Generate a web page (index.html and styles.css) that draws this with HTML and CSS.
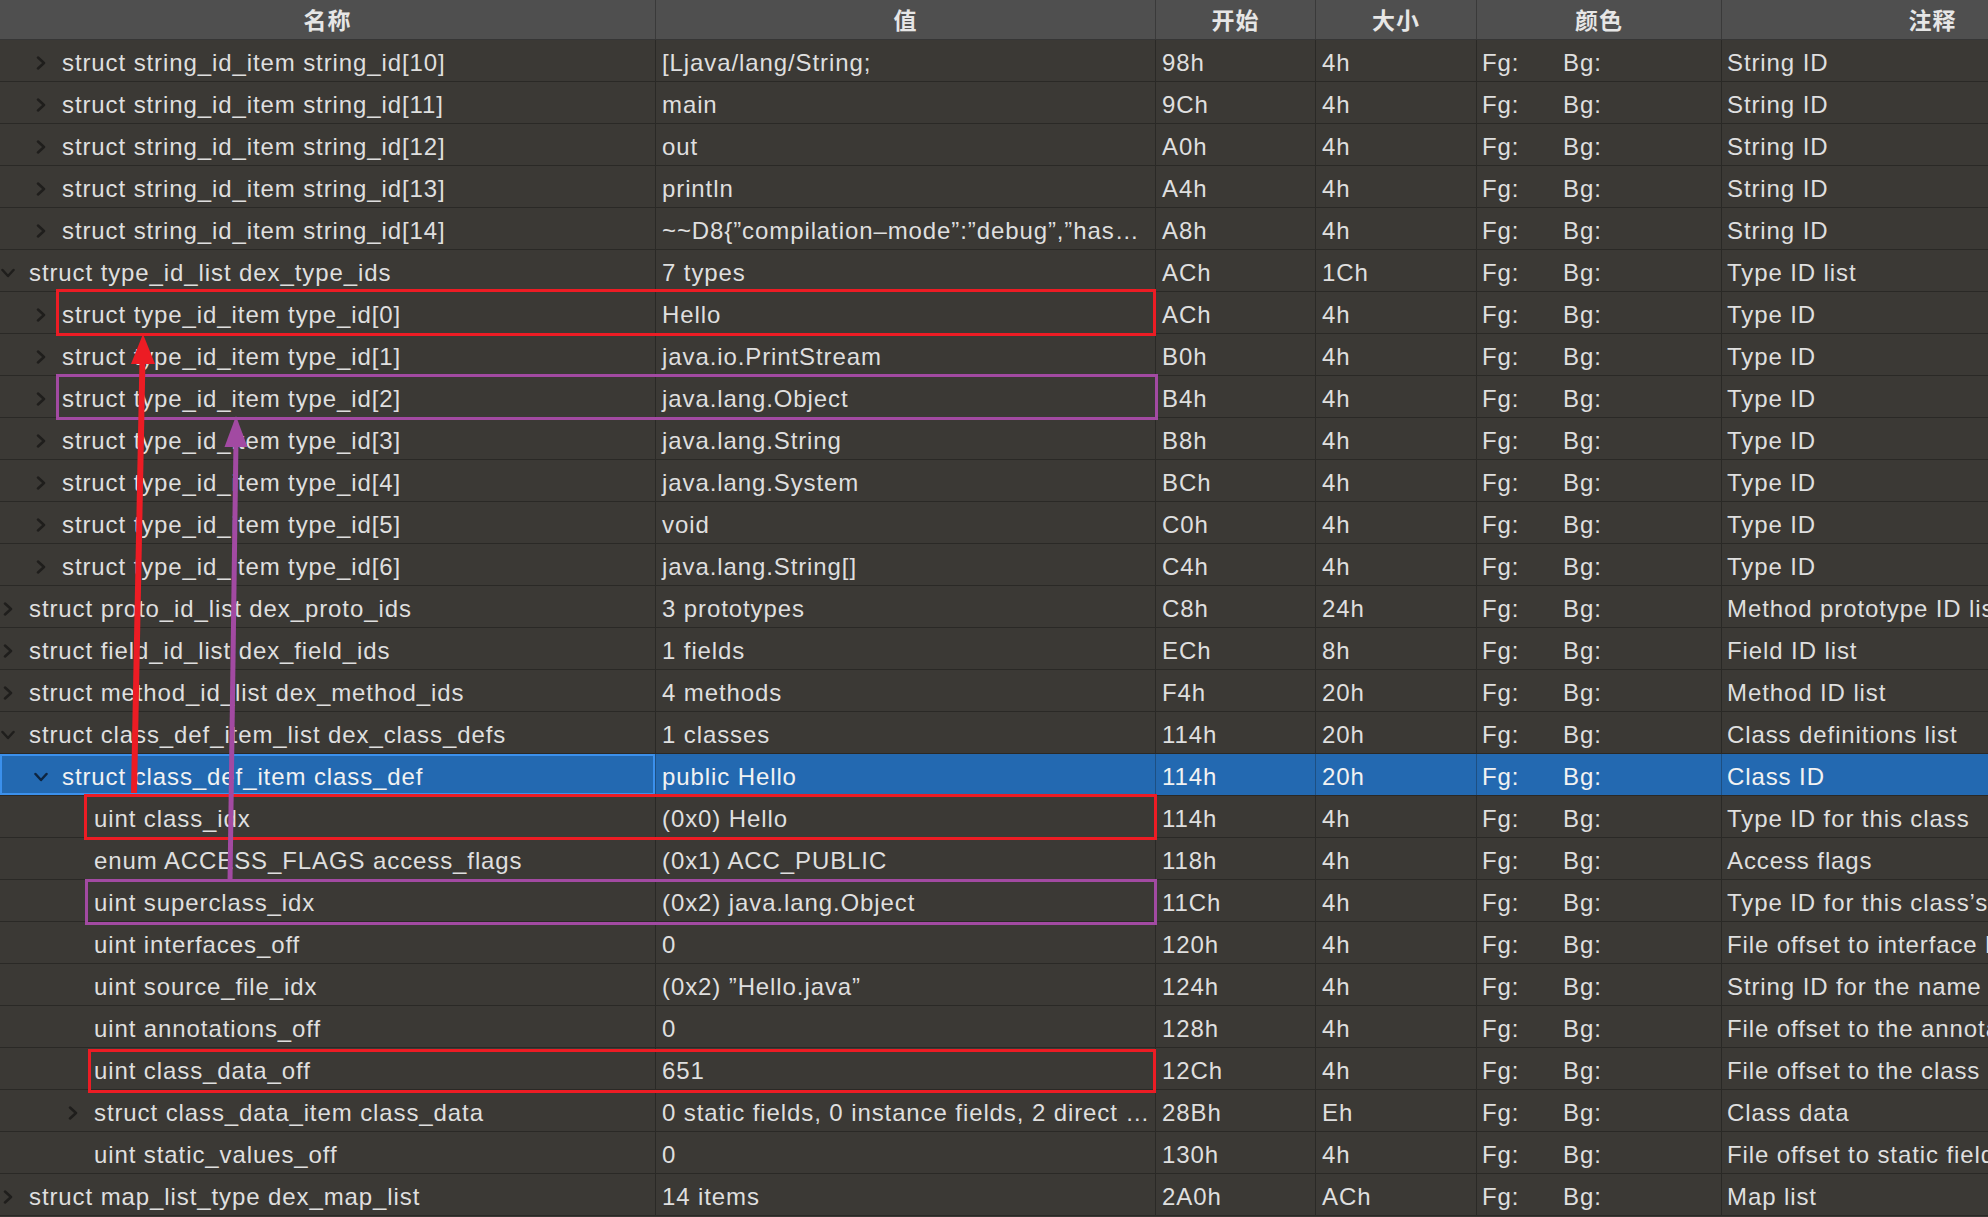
FILE: index.html
```html
<!DOCTYPE html>
<html lang="zh-CN">
<head>
<meta charset="utf-8">
<title>DEX Template</title>
<link rel="stylesheet" href="styles.css">
</head>
<body>
<div class="table">
  <div class="row head">
    <div class="cell">名称</div>
    <div class="cell">值</div>
    <div class="cell">开始</div>
    <div class="cell">大小</div>
    <div class="cell">颜色</div>
    <div class="cell">注释</div>
  </div>

  <div class="row"><div class="cell name lv1"><svg class="chev" viewBox="0 0 14 14"><polyline points="4,1.5 10,7 4,12.5"/></svg><span>struct string_id_item string_id[10]</span></div><div class="cell">[Ljava/lang/String;</div><div class="cell">98h</div><div class="cell">4h</div><div class="cell col"><span class="fg">Fg:</span><span>Bg:</span></div><div class="cell note">String ID</div></div>
  <div class="row"><div class="cell name lv1"><svg class="chev" viewBox="0 0 14 14"><polyline points="4,1.5 10,7 4,12.5"/></svg><span>struct string_id_item string_id[11]</span></div><div class="cell">main</div><div class="cell">9Ch</div><div class="cell">4h</div><div class="cell col"><span class="fg">Fg:</span><span>Bg:</span></div><div class="cell note">String ID</div></div>
  <div class="row"><div class="cell name lv1"><svg class="chev" viewBox="0 0 14 14"><polyline points="4,1.5 10,7 4,12.5"/></svg><span>struct string_id_item string_id[12]</span></div><div class="cell">out</div><div class="cell">A0h</div><div class="cell">4h</div><div class="cell col"><span class="fg">Fg:</span><span>Bg:</span></div><div class="cell note">String ID</div></div>
  <div class="row"><div class="cell name lv1"><svg class="chev" viewBox="0 0 14 14"><polyline points="4,1.5 10,7 4,12.5"/></svg><span>struct string_id_item string_id[13]</span></div><div class="cell">println</div><div class="cell">A4h</div><div class="cell">4h</div><div class="cell col"><span class="fg">Fg:</span><span>Bg:</span></div><div class="cell note">String ID</div></div>
  <div class="row"><div class="cell name lv1"><svg class="chev" viewBox="0 0 14 14"><polyline points="4,1.5 10,7 4,12.5"/></svg><span>struct string_id_item string_id[14]</span></div><div class="cell">~~D8{”compilation–mode”:”debug”,”has…</div><div class="cell">A8h</div><div class="cell">4h</div><div class="cell col"><span class="fg">Fg:</span><span>Bg:</span></div><div class="cell note">String ID</div></div>

  <div class="row"><div class="cell name lv0"><svg class="chev" viewBox="0 0 14 14"><polyline points="1.5,4 7,10 12.5,4"/></svg><span>struct type_id_list dex_type_ids</span></div><div class="cell">7 types</div><div class="cell">ACh</div><div class="cell">1Ch</div><div class="cell col"><span class="fg">Fg:</span><span>Bg:</span></div><div class="cell note">Type ID list</div></div>
  <div class="row"><div class="cell name lv1"><svg class="chev" viewBox="0 0 14 14"><polyline points="4,1.5 10,7 4,12.5"/></svg><span>struct type_id_item type_id[0]</span></div><div class="cell">Hello</div><div class="cell">ACh</div><div class="cell">4h</div><div class="cell col"><span class="fg">Fg:</span><span>Bg:</span></div><div class="cell note">Type ID</div></div>
  <div class="row"><div class="cell name lv1"><svg class="chev" viewBox="0 0 14 14"><polyline points="4,1.5 10,7 4,12.5"/></svg><span>struct type_id_item type_id[1]</span></div><div class="cell">java.io.PrintStream</div><div class="cell">B0h</div><div class="cell">4h</div><div class="cell col"><span class="fg">Fg:</span><span>Bg:</span></div><div class="cell note">Type ID</div></div>
  <div class="row"><div class="cell name lv1"><svg class="chev" viewBox="0 0 14 14"><polyline points="4,1.5 10,7 4,12.5"/></svg><span>struct type_id_item type_id[2]</span></div><div class="cell">java.lang.Object</div><div class="cell">B4h</div><div class="cell">4h</div><div class="cell col"><span class="fg">Fg:</span><span>Bg:</span></div><div class="cell note">Type ID</div></div>
  <div class="row"><div class="cell name lv1"><svg class="chev" viewBox="0 0 14 14"><polyline points="4,1.5 10,7 4,12.5"/></svg><span>struct type_id_item type_id[3]</span></div><div class="cell">java.lang.String</div><div class="cell">B8h</div><div class="cell">4h</div><div class="cell col"><span class="fg">Fg:</span><span>Bg:</span></div><div class="cell note">Type ID</div></div>
  <div class="row"><div class="cell name lv1"><svg class="chev" viewBox="0 0 14 14"><polyline points="4,1.5 10,7 4,12.5"/></svg><span>struct type_id_item type_id[4]</span></div><div class="cell">java.lang.System</div><div class="cell">BCh</div><div class="cell">4h</div><div class="cell col"><span class="fg">Fg:</span><span>Bg:</span></div><div class="cell note">Type ID</div></div>
  <div class="row"><div class="cell name lv1"><svg class="chev" viewBox="0 0 14 14"><polyline points="4,1.5 10,7 4,12.5"/></svg><span>struct type_id_item type_id[5]</span></div><div class="cell">void</div><div class="cell">C0h</div><div class="cell">4h</div><div class="cell col"><span class="fg">Fg:</span><span>Bg:</span></div><div class="cell note">Type ID</div></div>
  <div class="row"><div class="cell name lv1"><svg class="chev" viewBox="0 0 14 14"><polyline points="4,1.5 10,7 4,12.5"/></svg><span>struct type_id_item type_id[6]</span></div><div class="cell">java.lang.String[]</div><div class="cell">C4h</div><div class="cell">4h</div><div class="cell col"><span class="fg">Fg:</span><span>Bg:</span></div><div class="cell note">Type ID</div></div>

  <div class="row"><div class="cell name lv0"><svg class="chev" viewBox="0 0 14 14"><polyline points="4,1.5 10,7 4,12.5"/></svg><span>struct proto_id_list dex_proto_ids</span></div><div class="cell">3 prototypes</div><div class="cell">C8h</div><div class="cell">24h</div><div class="cell col"><span class="fg">Fg:</span><span>Bg:</span></div><div class="cell note">Method prototype ID list</div></div>
  <div class="row"><div class="cell name lv0"><svg class="chev" viewBox="0 0 14 14"><polyline points="4,1.5 10,7 4,12.5"/></svg><span>struct field_id_list dex_field_ids</span></div><div class="cell">1 fields</div><div class="cell">ECh</div><div class="cell">8h</div><div class="cell col"><span class="fg">Fg:</span><span>Bg:</span></div><div class="cell note">Field ID list</div></div>
  <div class="row"><div class="cell name lv0"><svg class="chev" viewBox="0 0 14 14"><polyline points="4,1.5 10,7 4,12.5"/></svg><span>struct method_id_list dex_method_ids</span></div><div class="cell">4 methods</div><div class="cell">F4h</div><div class="cell">20h</div><div class="cell col"><span class="fg">Fg:</span><span>Bg:</span></div><div class="cell note">Method ID list</div></div>
  <div class="row"><div class="cell name lv0"><svg class="chev" viewBox="0 0 14 14"><polyline points="1.5,4 7,10 12.5,4"/></svg><span>struct class_def_item_list dex_class_defs</span></div><div class="cell">1 classes</div><div class="cell">114h</div><div class="cell">20h</div><div class="cell col"><span class="fg">Fg:</span><span>Bg:</span></div><div class="cell note">Class definitions list</div></div>

  <div class="row sel"><div class="cell name lv1"><svg class="chev" viewBox="0 0 14 14"><polyline points="1.5,4 7,10 12.5,4"/></svg><span>struct class_def_item class_def</span></div><div class="cell">public Hello</div><div class="cell">114h</div><div class="cell">20h</div><div class="cell col"><span class="fg">Fg:</span><span>Bg:</span></div><div class="cell note">Class ID</div></div>

  <div class="row"><div class="cell name lv2"><span class="nochev"></span><span>uint class_idx</span></div><div class="cell">(0x0) Hello</div><div class="cell">114h</div><div class="cell">4h</div><div class="cell col"><span class="fg">Fg:</span><span>Bg:</span></div><div class="cell note">Type ID for this class</div></div>
  <div class="row"><div class="cell name lv2"><span class="nochev"></span><span>enum ACCESS_FLAGS access_flags</span></div><div class="cell">(0x1) ACC_PUBLIC</div><div class="cell">118h</div><div class="cell">4h</div><div class="cell col"><span class="fg">Fg:</span><span>Bg:</span></div><div class="cell note">Access flags</div></div>
  <div class="row"><div class="cell name lv2"><span class="nochev"></span><span>uint superclass_idx</span></div><div class="cell">(0x2) java.lang.Object</div><div class="cell">11Ch</div><div class="cell">4h</div><div class="cell col"><span class="fg">Fg:</span><span>Bg:</span></div><div class="cell note">Type ID for this class’s superclass</div></div>
  <div class="row"><div class="cell name lv2"><span class="nochev"></span><span>uint interfaces_off</span></div><div class="cell">0</div><div class="cell">120h</div><div class="cell">4h</div><div class="cell col"><span class="fg">Fg:</span><span>Bg:</span></div><div class="cell note">File offset to interface list</div></div>
  <div class="row"><div class="cell name lv2"><span class="nochev"></span><span>uint source_file_idx</span></div><div class="cell">(0x2) ”Hello.java”</div><div class="cell">124h</div><div class="cell">4h</div><div class="cell col"><span class="fg">Fg:</span><span>Bg:</span></div><div class="cell note">String ID for the name of source file</div></div>
  <div class="row"><div class="cell name lv2"><span class="nochev"></span><span>uint annotations_off</span></div><div class="cell">0</div><div class="cell">128h</div><div class="cell">4h</div><div class="cell col"><span class="fg">Fg:</span><span>Bg:</span></div><div class="cell note">File offset to the annotations</div></div>
  <div class="row"><div class="cell name lv2"><span class="nochev"></span><span>uint class_data_off</span></div><div class="cell">651</div><div class="cell">12Ch</div><div class="cell">4h</div><div class="cell col"><span class="fg">Fg:</span><span>Bg:</span></div><div class="cell note">File offset to the class data</div></div>
  <div class="row"><div class="cell name lv2"><svg class="chev" viewBox="0 0 14 14"><polyline points="4,1.5 10,7 4,12.5"/></svg><span>struct class_data_item class_data</span></div><div class="cell">0 static fields, 0 instance fields, 2 direct …</div><div class="cell">28Bh</div><div class="cell">Eh</div><div class="cell col"><span class="fg">Fg:</span><span>Bg:</span></div><div class="cell note">Class data</div></div>
  <div class="row"><div class="cell name lv2"><span class="nochev"></span><span>uint static_values_off</span></div><div class="cell">0</div><div class="cell">130h</div><div class="cell">4h</div><div class="cell col"><span class="fg">Fg:</span><span>Bg:</span></div><div class="cell note">File offset to static field values</div></div>

  <div class="row"><div class="cell name lv0"><svg class="chev" viewBox="0 0 14 14"><polyline points="4,1.5 10,7 4,12.5"/></svg><span>struct map_list_type dex_map_list</span></div><div class="cell">14 items</div><div class="cell">2A0h</div><div class="cell">ACh</div><div class="cell col"><span class="fg">Fg:</span><span>Bg:</span></div><div class="cell note">Map list</div></div>

  <svg class="marks" width="1988" height="1217" viewBox="0 0 1988 1217">
    <g fill="none" stroke-width="3">
      <rect class="red" x="57.5" y="290.5" width="1097" height="44"/>
      <rect class="purple" x="57.5" y="375.5" width="1099" height="43"/>
      <rect class="red" x="85.5" y="795.5" width="1070" height="43"/>
      <rect class="purple" x="86.5" y="880.5" width="1069" height="43"/>
      <rect class="red" x="89.5" y="1050.5" width="1065" height="41"/>
    </g>
    <line class="red" x1="134" y1="793" x2="142.5" y2="358" stroke-width="6"/>
    <polygon class="redfill" points="143,334 131,364 155,364"/>
    <line class="purple" x1="230" y1="882" x2="236" y2="440" stroke-width="5"/>
    <polygon class="purplefill" points="236,416 224.5,447 247.5,447"/>
  </svg>
</div>
</body>
</html>
```

FILE: styles.css
```css
html, body {
  margin: 0;
  padding: 0;
  background: #3b3935;
  overflow: hidden;
}

body {
  width: 1988px;
  height: 1217px;
  font-family: "Liberation Sans", Arial, "Noto Sans CJK SC", sans-serif;
  font-size: 24px;
  letter-spacing: 0.9px;
  color: #dfdfdf;
}

.table {
  position: relative;
  width: 2144px;
}

.row {
  display: grid;
  grid-template-columns: 656px 500px 160px 161px 245px 422px;
  height: 42px;
  box-sizing: border-box;
  border-bottom: 1px solid #2a2926;
  background: #3b3935;
}

.cell {
  box-sizing: border-box;
  border-right: 1px solid #2a2926;
  padding: 4px 0 0 6px;
  line-height: 37px;
  white-space: nowrap;
  overflow: hidden;
}

.cell.col,
.cell.note {
  padding-left: 5px;
}

.col {
  display: flex;
}

.col .fg {
  width: 81px;
}

.head {
  height: 40px;
  background: #4f4f4f;
  border-bottom: 1px solid #363636;
}

.head .cell {
  padding: 0;
  text-align: center;
  line-height: 39px;
  font-family: "Noto Sans CJK SC", sans-serif;
  font-weight: 700;
  font-size: 23px;
  letter-spacing: 1px;
  color: #e6e6e6;
  border-right-color: #3a3a3a;
}

.name {
  display: flex;
  align-items: center;
}

.lv0 { padding-left: 1px; }
.lv1 { padding-left: 34px; }
.lv2 { padding-left: 66px; }

.chev,
.nochev {
  flex: none;
  width: 14px;
  height: 14px;
  margin-right: 14px;
}

.chev polyline {
  fill: none;
  stroke: #1f1e1c;
  stroke-width: 2.5;
  stroke-linecap: round;
  stroke-linejoin: round;
}

.row.sel {
  background: #2369b1;
}

.row.sel .cell {
  color: #f2f2f2;
  border-right-color: #1d4f82;
}

.row.sel .name {
  box-shadow: inset 0 0 0 2px #3b90ec;
}

.row.sel .chev polyline {
  stroke: #0e2540;
}

.marks {
  position: absolute;
  left: 0;
  top: 0;
  pointer-events: none;
}

.marks .red { stroke: #ec1c24; }
.marks .purple { stroke: #a24aa2; }
.marks .redfill { fill: #ec1c24; }
.marks .purplefill { fill: #a24aa2; }
```
